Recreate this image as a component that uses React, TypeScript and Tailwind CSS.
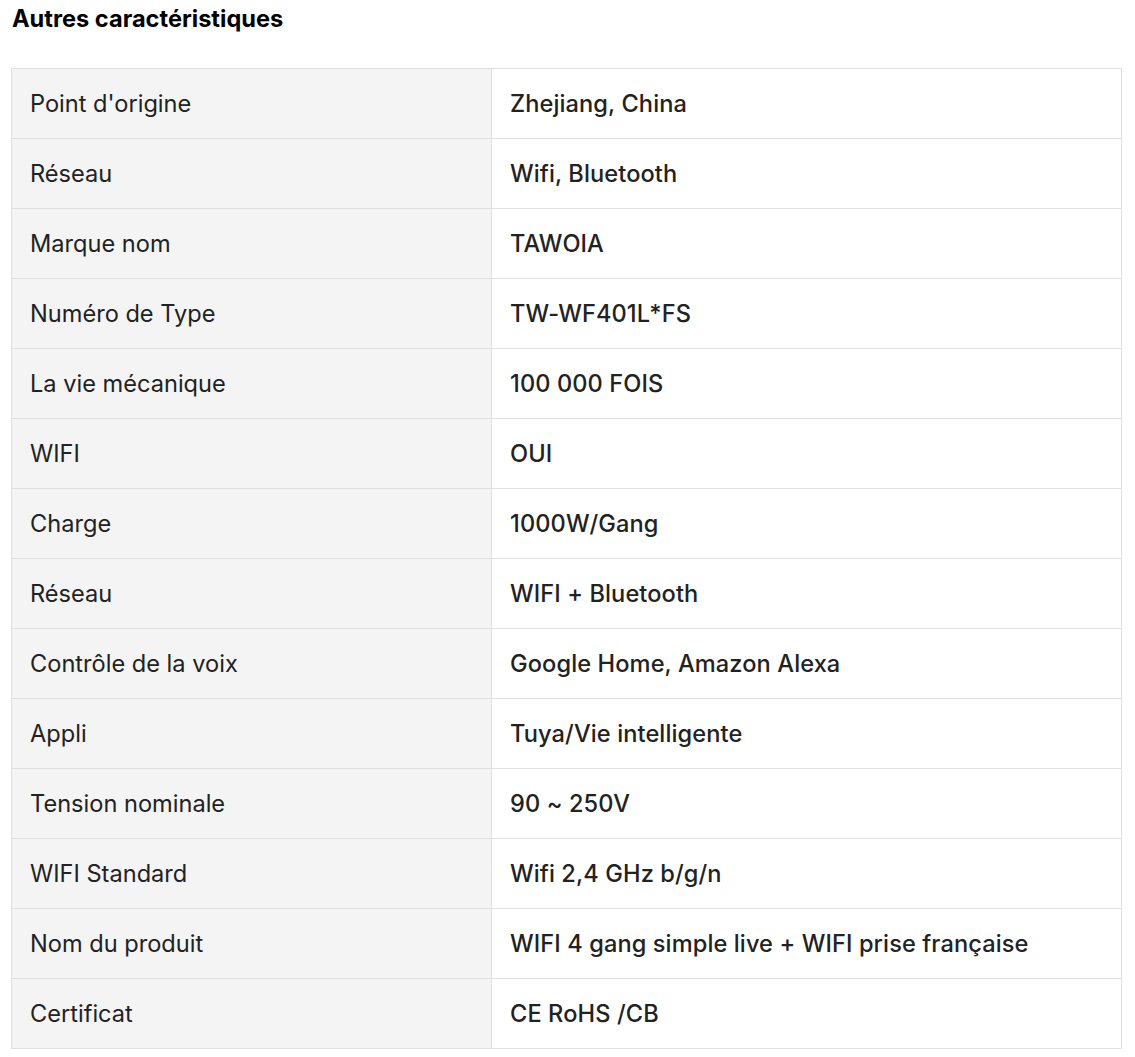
const ROWS: [string, string][] = [
  ["Point d'origine", 'Zhejiang, China'],
  ['Réseau', 'Wifi, Bluetooth'],
  ['Marque nom', 'TAWOIA'],
  ['Numéro de Type', 'TW-WF401L*FS'],
  ['La vie mécanique', '100 000 FOIS'],
  ['WIFI', 'OUI'],
  ['Charge', '1000W/Gang'],
  ['Réseau', 'WIFI + Bluetooth'],
  ['Contrôle de la voix', 'Google Home, Amazon Alexa'],
  ['Appli', 'Tuya/Vie intelligente'],
  ['Tension nominale', '90 ~ 250V'],
  ['WIFI Standard', 'Wifi 2,4 GHz b/g/n'],
  ['Nom du produit', 'WIFI 4 gang simple live + WIFI prise française'],
  ['Certificat', 'CE RoHS /CB'],
];

export default function App() {
  return (
    <div className="bg-white pl-[11px] pr-[13px] pt-[4px] pb-[8px] font-['Inter',sans-serif] text-[#222]">
      <h2 className="pl-px text-[23.6px] font-bold leading-[30px] text-black">Autres caractéristiques</h2>
      <table className="mt-[34px] w-full border-collapse text-[23.6px]">
        <tbody>
          {ROWS.map(([label, value], i) => (
            <tr key={i} className="h-[70px]">
              <td className="w-[480px] border border-[#e0e0e0] bg-[#f4f4f4] pl-[18px] align-middle">{label}</td>
              <td className="border border-[#e0e0e0] pl-[18px] align-middle font-medium tracking-[0.1px]">{value}</td>
            </tr>
          ))}
        </tbody>
      </table>
    </div>
  );
}
